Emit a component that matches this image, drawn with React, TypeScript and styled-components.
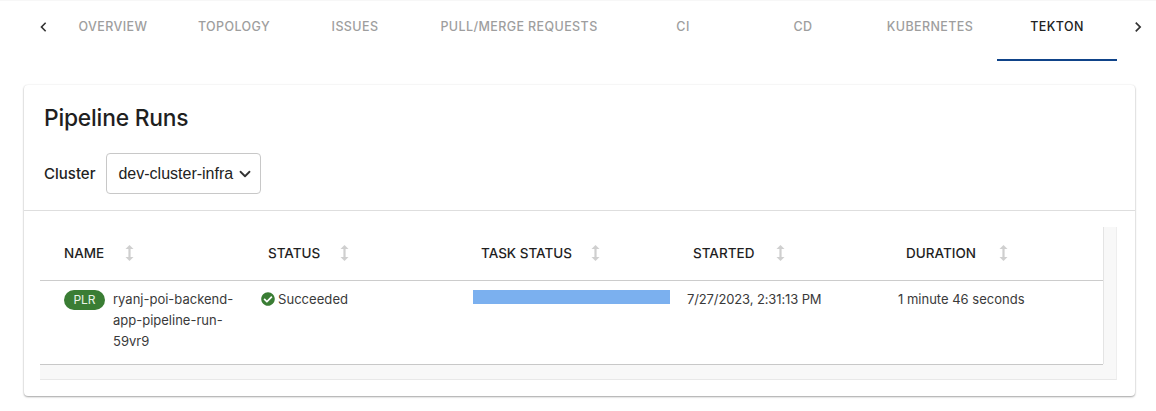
import React from "react"
import styled, { createGlobalStyle } from "styled-components"
import { FaCheckCircle } from "react-icons/fa"
import { MdKeyboardArrowLeft, MdKeyboardArrowRight } from "react-icons/md"
import { ChevronDown } from "lucide-react"

const GlobalStyle = createGlobalStyle`
  html, body {
    margin: 0;
    background: #ffffff;
    overflow: hidden;
  }
  body {
    font-family: 'Inter', 'Noto Sans', sans-serif;
    color: #1f1f1f;
  }
  * { box-sizing: border-box; }
`

const Page = styled.div`
  width: 1156px;
  height: 411px;
  overflow: hidden;
  border-top: 1px solid #f7f7f7;
`

const TabBar = styled.div`
  display: flex;
  height: 60px;
  padding-left: 24px;
`

const ScrollButton = styled.div<{ $width: number; $pad: number }>`
  display: flex;
  align-items: flex-start;
  width: ${p => p.$width}px;
  flex: none;
  padding: 16px 0 0 ${p => p.$pad}px;
  color: #333333;
  font-size: 20px;
`

const Tab = styled.div<{ $width: number; $active?: boolean }>`
  width: ${p => p.$width}px;
  flex: none;
  text-align: center;
  padding-top: 16px;
  font-size: 12.5px;
  line-height: 20px;
  font-weight: 500;
  letter-spacing: 0.4px;
  color: ${p => (p.$active ? "#222222" : "#9e9e9e")};
  border-bottom: 2px solid ${p => (p.$active ? "#0f4389" : "transparent")};
`

const Card = styled.div`
  width: 1111px;
  height: 311px;
  margin: 24px 0 0 24px;
  background: #ffffff;
  border-radius: 4px;
  box-shadow: 0 1px 2px rgba(0, 0, 0, 0.35), 0 0 2px rgba(0, 0, 0, 0.08);
`

const CardHeader = styled.div`
  height: 126px;
  padding: 18px 20px 0;
  border-bottom: 1px solid #dedede;
`

const Title = styled.h2`
  margin: 0;
  font-size: 22.8px;
  line-height: 30px;
  font-weight: 500;
  letter-spacing: -0.2px;
  color: #1f1f1f;
`

const FilterRow = styled.div`
  display: flex;
  align-items: center;
  gap: 11px;
  margin-top: 20px;
`

const FilterLabel = styled.span`
  font-size: 15px;
  font-weight: 500;
  color: #222222;
`

const Select = styled.div`
  display: flex;
  align-items: center;
  justify-content: space-between;
  width: 155px;
  height: 41px;
  padding: 0 6px 0 11px;
  border: 1px solid #c8c8c8;
  border-radius: 4px;
  font-family: 'Liberation Sans', sans-serif;
  font-size: 16px;
  color: #222222;
`

const TableArea = styled.div`
  margin: 16px 18px 0 16px;
  height: 153px;
  background: #f8f8f8;
  border-right: 1px solid #eeeeee;
  border-bottom: 1px solid #e8e8e8;
`

const Table = styled.table`
  width: 1063px;
  height: 137px;
  border-collapse: collapse;
  table-layout: fixed;
  background: #ffffff;
  box-shadow: 1px 0 0 #e4e4e4, 0 1px 0 #c8c8c8;
`

const HeadCell = styled.th<{ $width: number }>`
  width: ${p => p.$width}px;
  height: 53px;
  padding: 0 0 0 24px;
  text-align: left;
  font-size: 13.5px;
  font-weight: 500;
  color: #1f1f1f;
  border-bottom: 1px solid #cccccc;
`

const HeadInner = styled.span<{ $gap: number }>`
  display: flex;
  align-items: center;
  gap: ${p => p.$gap}px;
`

const BodyCell = styled.td<{ $pad: number }>`
  vertical-align: top;
  padding: 8px 0 0 ${p => p.$pad}px;
  font-size: 13px;
  line-height: 21px;
  color: #3a3a3a;
`

const NameWrap = styled.div`
  display: flex;
  align-items: flex-start;
  gap: 8px;
`

const Chip = styled.span`
  flex: none;
  width: 41px;
  height: 20px;
  margin-top: 1px;
  border-radius: 10px;
  background: #3a7d34;
  color: #e9f3e8;
  font-size: 12px;
  line-height: 20px;
  text-align: center;
`

const StatusWrap = styled.div`
  display: flex;
  align-items: center;
  gap: 3px;
  color: #3a7d34;
  font-size: 14px;
`

const StatusText = styled.span`
  color: #3a3a3a;
  font-size: 13.1px;
`

const TaskBar = styled.div`
  width: 197px;
  height: 14px;
  margin-top: 1px;
  background: #7bb0ef;
`

const DateText = styled.span`
  letter-spacing: -0.12px;
`

const SortIcon = () => (
  <svg width="9" height="16" viewBox="0 0 9 16" fill="#cfcfcf">
    <path d="M4.5 0 8.5 4H5.6v8h2.9l-4 4-4-4h2.9V4H.5z" />
  </svg>
)

const tabs = [
  { label: "Overview", width: 120 },
  { label: "Topology", width: 122 },
  { label: "Issues", width: 120 },
  { label: "Pull/Merge Requests", width: 208 },
  { label: "CI", width: 120 },
  { label: "CD", width: 120 },
  { label: "Kubernetes", width: 134 },
  { label: "Tekton", width: 120, active: true },
]

const columns = [
  { label: "NAME", width: 204, gap: 21 },
  { label: "STATUS", width: 213, gap: 20 },
  { label: "TASK STATUS", width: 212, gap: 19 },
  { label: "STARTED", width: 213, gap: 22 },
  { label: "DURATION", width: 221, gap: 23 },
]

const App = () => (
  <Page>
    <GlobalStyle />
    <TabBar>
      <ScrollButton $width={29} $pad={10}>
        <MdKeyboardArrowLeft />
      </ScrollButton>
      {tabs.map(t => (
        <Tab key={t.label} $width={t.width} $active={t.active}>
          {t.label.toUpperCase()}
        </Tab>
      ))}
      <ScrollButton $width={39} $pad={11}>
        <MdKeyboardArrowRight />
      </ScrollButton>
    </TabBar>
    <Card>
      <CardHeader>
        <Title>Pipeline Runs</Title>
        <FilterRow>
          <FilterLabel>Cluster</FilterLabel>
          <Select>
            dev-cluster-infra
            <ChevronDown size={18} strokeWidth={2.4} color="#333333" />
          </Select>
        </FilterRow>
      </CardHeader>
      <TableArea>
        <Table>
          <thead>
            <tr>
              {columns.map(c => (
                <HeadCell key={c.label} $width={c.width}>
                  <HeadInner $gap={c.gap}>
                    {c.label}
                    <SortIcon />
                  </HeadInner>
                </HeadCell>
              ))}
            </tr>
          </thead>
          <tbody>
            <tr>
              <BodyCell $pad={24}>
                <NameWrap>
                  <Chip>PLR</Chip>
                  <span>ryanj-poi-backend-app-pipeline-run-59vr9</span>
                </NameWrap>
              </BodyCell>
              <BodyCell $pad={17}>
                <StatusWrap>
                  <FaCheckCircle size={14} />
                  <StatusText>Succeeded</StatusText>
                </StatusWrap>
              </BodyCell>
              <BodyCell $pad={16}>
                <TaskBar />
              </BodyCell>
              <BodyCell $pad={18}>
                <DateText>7/27/2023, 2:31:13 PM</DateText>
              </BodyCell>
              <BodyCell $pad={16}>1 minute 46 seconds</BodyCell>
            </tr>
          </tbody>
        </Table>
      </TableArea>
    </Card>
  </Page>
)

export default App
